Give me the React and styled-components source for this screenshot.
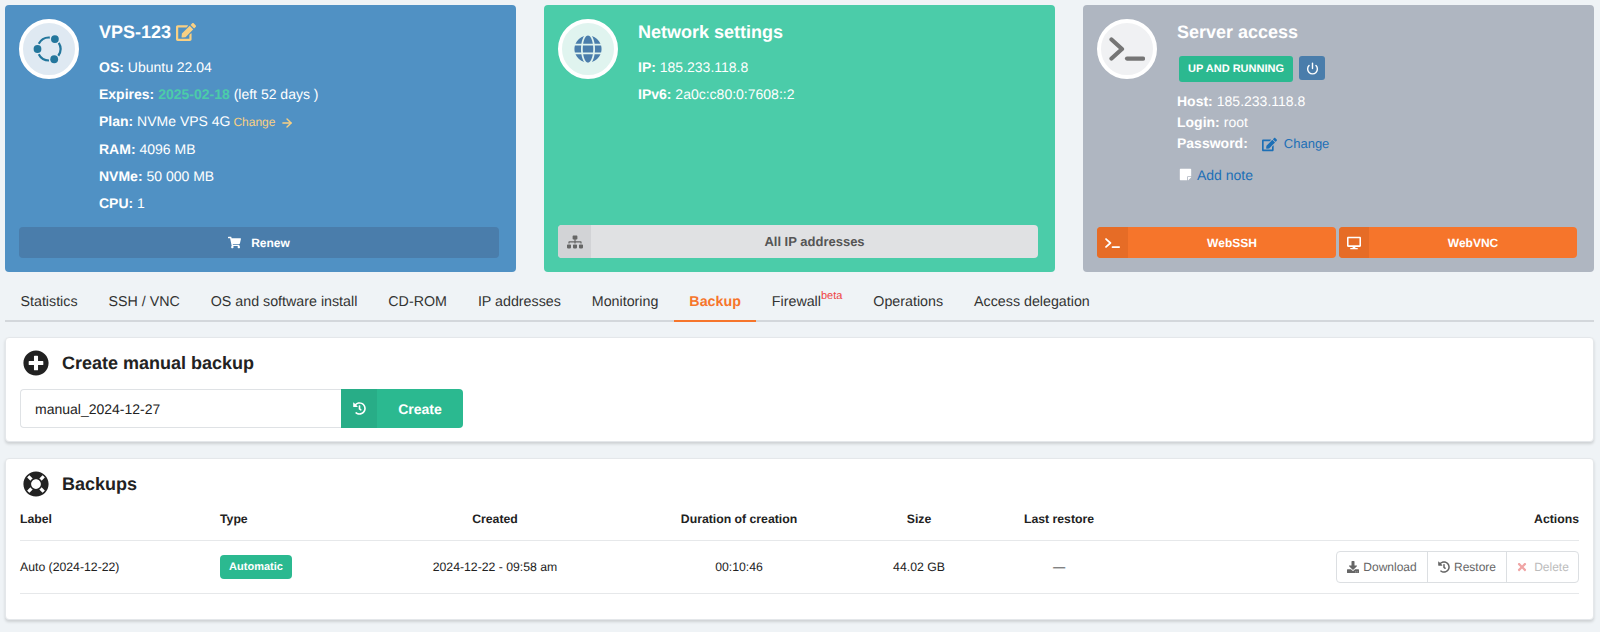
import React from 'react';
import styled, { createGlobalStyle } from 'styled-components';
import {
  FaEdit, FaShoppingCart, FaGlobe, FaSitemap, FaStickyNote, FaDesktop,
  FaPlusCircle, FaLifeRing, FaHistory, FaDownload, FaTimes,
} from 'react-icons/fa';
import { ArrowRight, Power } from 'lucide-react';

const Global = createGlobalStyle`
  html, body { margin: 0; padding: 0; background: #eff3f6; }
  body {
    font-family: "Liberation Sans", Arial, sans-serif;
    font-size: 14px;
    color: #222;
    -webkit-font-smoothing: antialiased;
    text-rendering: geometricPrecision;
  }
  button, input { text-rendering: geometricPrecision; }
`;

const Page = styled.div`
  width: 1600px;
  height: 632px;
  padding: 5px 6px 0 5px;
  box-sizing: border-box;
  overflow: hidden;
`;

const Cards = styled.div`
  display: grid;
  grid-template-columns: repeat(3, 511px);
  column-gap: 28px;
`;

const Card = styled.section`
  height: 267px;
  box-sizing: border-box;
  padding: 14px 17px 14px 14px;
  border-radius: 4px;
  background: ${p => p.$bg};
  color: #fff;
  display: flex;
  flex-direction: column;
`;

const CardHead = styled.div`
  display: flex;
  gap: 20px;
  flex: 1;
`;

const Avatar = styled.div`
  width: 60px;
  height: 60px;
  box-sizing: border-box;
  border: 4px solid #fff;
  border-radius: 50%;
  background: ${p => p.$bg};
  color: ${p => p.$fg};
  display: flex;
  align-items: center;
  justify-content: center;
  flex: none;
`;

const CardTitle = styled.h2`
  margin: 0 0 8px;
  font-size: 18px;
  line-height: 27px;
  font-weight: 700;
  display: flex;
  align-items: center;
  gap: 5px;
  color: #fff;
`;

const YellowEdit = styled(FaEdit)`
  color: #f9d083;
  font-size: 20px;
  margin-top: -1px;
`;

const InfoLine = styled.div`
  line-height: 27px;
  white-space: nowrap;
  font-size: 14px;
`;

const Strong = styled.b`
  font-weight: 700;
`;

const Date = styled.b`
  color: #4bcca9;
  font-weight: 700;
`;

const ChangePlan = styled.a`
  color: #f9d083;
  font-size: 12px;
  margin-left: -1px;
  display: inline-flex;
  align-items: center;
  gap: 5px;
`;

const WideButton = styled.button`
  height: ${p => p.$h || 31}px;
  width: 100%;
  border: 0;
  border-radius: 4px;
  padding: 0;
  background: ${p => p.$bg};
  color: ${p => p.$fg || '#fff'};
  font: 700 12px "Liberation Sans", Arial, sans-serif;
  display: flex;
  align-items: stretch;
  overflow: hidden;
  flex: none;
`;

const ButtonIcon = styled.span`
  width: ${p => p.$w}px;
  background: ${p => p.$bg};
  color: ${p => p.$fg || 'inherit'};
  display: flex;
  align-items: center;
  justify-content: center;
  flex: none;
`;

const ButtonText = styled.span`
  flex: 1;
  display: flex;
  align-items: center;
  justify-content: center;
  gap: 10px;
  font-size: ${p => p.$size || 12}px;
`;

const ButtonPair = styled.div`
  display: grid;
  grid-template-columns: 239px 238px;
  gap: 3px;
`;

const StatusRow = styled.div`
  display: flex;
  gap: 6px;
  align-items: flex-start;
  margin: 10px 0 9px 2px;
`;

const StatusBadge = styled.span`
  width: 114px;
  height: 26px;
  border-radius: 3px;
  background: #2bb990;
  color: #fff;
  font-size: 11px;
  font-weight: 700;
  display: flex;
  align-items: center;
  justify-content: center;
`;

const PowerButton = styled.span`
  width: 26px;
  height: 24px;
  border-radius: 3px;
  background: #4a7dab;
  color: #fff;
  display: flex;
  align-items: center;
  justify-content: center;
`;

const AccessLine = styled.div`
  line-height: 21.2px;
  font-size: 14px;
  white-space: nowrap;
  display: flex;
  align-items: center;
  gap: 4px;
`;

const PassLink = styled.a`
  color: #1c6fb6;
  font-size: 13px;
  display: inline-flex;
  align-items: center;
  gap: 7px;
  margin-left: 10px;
`;

const NoteLine = styled.div`
  margin: 10px 0 0 2px;
  display: flex;
  align-items: center;
  gap: 5px;
  line-height: 20px;
  font-size: 14px;
  color: #1c6fb6;
`;

const WhiteNote = styled(FaStickyNote)`
  color: #fff;
  font-size: 13px;
`;

const Tabs = styled.nav`
  margin-top: 10px;
  height: 38px;
  display: flex;
  border-bottom: 2px solid #d3d7db;
  box-sizing: content-box;
`;

const Tab = styled.a`
  padding: 0 15.5px;
  height: 38px;
  box-sizing: content-box;
  line-height: 40px;
  font-size: 14.25px;
  white-space: nowrap;
  color: ${p => (p.$active ? '#f6752b' : '#333')};
  font-weight: ${p => (p.$active ? 700 : 400)};
  border-bottom: 2px solid ${p => (p.$active ? '#f6752b' : 'transparent')};
`;

const Beta = styled.sup`
  color: #ee4444;
  font-size: 11px;
  line-height: 0;
  vertical-align: 7px;
`;

const Panel = styled.section`
  margin-top: ${p => p.$mt}px;
  height: ${p => p.$h}px;
  box-sizing: border-box;
  background: #fff;
  border: 1px solid #e4e7ea;
  border-radius: 4px;
  box-shadow: 0 2px 3px rgba(0, 0, 0, 0.14);
  padding: 13px 14px;
`;

const PanelTitle = styled.h3`
  margin: 0 0 14px;
  height: 24px;
  padding-left: 3px;
  display: flex;
  align-items: center;
  gap: 13px;
  font-size: 18px;
  font-weight: 700;
  color: #222;
`;

const TitleIcon = styled.span`
  font-size: 26px;
  width: 26px;
  height: 26px;
  display: flex;
  color: #222;
`;

const CreateForm = styled.div`
  display: flex;
  height: 39px;
`;

const NameInput = styled.input`
  width: 321px;
  box-sizing: border-box;
  border: 1px solid #dfe2e5;
  border-right: 0;
  border-radius: 4px 0 0 4px;
  padding: 0 14px;
  font: 14px "Liberation Sans", Arial, sans-serif;
  color: #222;
  outline: none;
`;

const CreateButton = styled.button`
  width: 122px;
  border: 0;
  padding: 0;
  background: #2bb990;
  border-radius: 0 4px 4px 0;
  color: #fff;
  font: 700 14px "Liberation Sans", Arial, sans-serif;
  display: flex;
  align-items: stretch;
  overflow: hidden;
`;

const columns = '200px 175px 200px 288px 72px 208px 1fr';

const HeadRow = styled.div`
  display: grid;
  grid-template-columns: ${columns};
  height: 28px;
  padding-top: 2px;
  align-items: start;
  border-bottom: 1px solid #e6e8ea;
`;

const DataRow = styled.div`
  display: grid;
  grid-template-columns: ${columns};
  height: 52px;
  align-items: center;
  border-bottom: 1px solid #e6e8ea;
`;

const HeadCell = styled.div`
  font-size: 12.25px;
  font-weight: 700;
  line-height: 14px;
  color: #222;
  text-align: ${p => p.$align || 'left'};
`;

const Cell = styled.div`
  font-size: 12.25px;
  color: #222;
  text-align: ${p => p.$align || 'left'};
`;

const TypeBadge = styled.span`
  display: inline-flex;
  width: 72px;
  height: 24px;
  border-radius: 4px;
  background: #2bb990;
  color: #fff;
  font-size: 11px;
  font-weight: 700;
  align-items: center;
  justify-content: center;
`;

const ActionGroup = styled.div`
  display: inline-flex;
  height: 32px;
  box-sizing: border-box;
  border: 1px solid #dcdfe2;
  border-radius: 4px;
  vertical-align: middle;
`;

const ActionButton = styled.span`
  width: ${p => p.$w}px;
  display: flex;
  align-items: center;
  justify-content: center;
  gap: 4px;
  font-size: 12px;
  color: ${p => (p.$muted ? '#bcbcbc' : '#666')};
  border-left: ${p => (p.$first ? '0' : '1px solid #dcdfe2')};
  box-sizing: border-box;
`;

const DeleteIcon = styled(FaTimes)`
  color: #f0a5a5;
  font-size: 12px;
  margin-right: 2px;
`;

const UbuntuIcon = () => (
  <svg width="32" height="32" viewBox="0 0 32 32" fill="none">
    <g stroke="#23769c" strokeWidth="2.2">
      <path d="M25.75 9.91A11.5 11.5 0 0 1 25.3 22.76" />
      <path d="M16 27.5A11.5 11.5 0 0 1 5.75 21.22" />
      <path d="M5.75 10.78A11.5 11.5 0 0 1 16.8 4.53" />
    </g>
    <g fill="#23769c">
      <circle cx="21.9" cy="6.1" r="3.9" />
      <circle cx="4.5" cy="16" r="3.9" />
      <circle cx="21.2" cy="26.25" r="3.9" />
    </g>
  </svg>
);

const TerminalIcon = ({ width }) => (
  <svg width={width} height={(width * 24) / 36} viewBox="0 0 36 24" fill="none" stroke="currentColor" strokeWidth="4.2" strokeLinecap="round" strokeLinejoin="round">
    <path d="M2.5 2.5L13 12L2.5 21.5" />
    <path d="M18 21.6H34" />
  </svg>
);

const tabs = ['Statistics', 'SSH / VNC', 'OS and software install', 'CD-ROM', 'IP addresses', 'Monitoring', 'Backup', 'Firewall', 'Operations', 'Access delegation'];

export default function App() {
  return (
    <Page>
      <Global />
      <Cards>
        <Card $bg="#5091c4">
          <CardHead>
            <Avatar $bg="#dfe9f2"><UbuntuIcon /></Avatar>
            <div>
              <CardTitle>VPS-123 <YellowEdit /></CardTitle>
              <InfoLine><Strong>OS:</Strong> Ubuntu 22.04</InfoLine>
              <InfoLine><Strong>Expires:</Strong> <Date>2025-02-18</Date> (left 52 days )</InfoLine>
              <InfoLine><Strong>Plan:</Strong> NVMe VPS 4G <ChangePlan>Change <ArrowRight size={14} strokeWidth={2.4} /></ChangePlan></InfoLine>
              <InfoLine><Strong>RAM:</Strong> 4096 MB</InfoLine>
              <InfoLine><Strong>NVMe:</Strong> 50 000 MB</InfoLine>
              <InfoLine><Strong>CPU:</Strong> 1</InfoLine>
            </div>
          </CardHead>
          <WideButton $bg="#4a7dab">
            <ButtonText><FaShoppingCart size={13} /> Renew</ButtonText>
          </WideButton>
        </Card>

        <Card $bg="#4bcca9">
          <CardHead>
            <Avatar $bg="#e0f4ef" $fg="#4a7dab"><FaGlobe size={28} /></Avatar>
            <div>
              <CardTitle>Network settings</CardTitle>
              <InfoLine><Strong>IP:</Strong> 185.233.118.8</InfoLine>
              <InfoLine><Strong>IPv6:</Strong> 2a0c:c80:0:7608::2</InfoLine>
            </div>
          </CardHead>
          <WideButton $h={33} $bg="#e0e1e3" $fg="#555">
            <ButtonIcon $w={33} $bg="#d2d3d6" $fg="#666"><FaSitemap size={16} /></ButtonIcon>
            <ButtonText $size={13}>All IP addresses</ButtonText>
          </WideButton>
        </Card>

        <Card $bg="#afb6c1">
          <CardHead>
            <Avatar $bg="#f0f1f3" $fg="#757575"><TerminalIcon width={36} /></Avatar>
            <div>
              <CardTitle>Server access</CardTitle>
              <StatusRow>
                <StatusBadge>UP AND RUNNING</StatusBadge>
                <PowerButton><Power size={13} strokeWidth={2.6} /></PowerButton>
              </StatusRow>
              <AccessLine><Strong>Host:</Strong> 185.233.118.8</AccessLine>
              <AccessLine><Strong>Login:</Strong> root</AccessLine>
              <AccessLine>
                <Strong>Password:</Strong>
                <PassLink><FaEdit size={15} /> Change</PassLink>
              </AccessLine>
              <NoteLine><WhiteNote /> Add note</NoteLine>
            </div>
          </CardHead>
          <ButtonPair>
            <WideButton $bg="#f6752b">
              <ButtonIcon $w={31} $bg="#e66c26"><TerminalIcon width={15} /></ButtonIcon>
              <ButtonText>WebSSH</ButtonText>
            </WideButton>
            <WideButton $bg="#f6752b">
              <ButtonIcon $w={30} $bg="#e66c26"><FaDesktop size={14} /></ButtonIcon>
              <ButtonText>WebVNC</ButtonText>
            </WideButton>
          </ButtonPair>
        </Card>
      </Cards>

      <Tabs>
        {tabs.map(t => (
          <Tab key={t} $active={t === 'Backup'}>
            {t}{t === 'Firewall' && <Beta>beta</Beta>}
          </Tab>
        ))}
      </Tabs>

      <Panel $mt={15} $h={105}>
        <PanelTitle><TitleIcon><FaPlusCircle /></TitleIcon>Create manual backup</PanelTitle>
        <CreateForm>
          <NameInput defaultValue="manual_2024-12-27" />
          <CreateButton>
            <ButtonIcon $w={36} $bg="#28ad87"><FaHistory size={13} /></ButtonIcon>
            <ButtonText $size={14}>Create</ButtonText>
          </CreateButton>
        </CreateForm>
      </Panel>

      <Panel $mt={16} $h={162}>
        <PanelTitle><TitleIcon><FaLifeRing /></TitleIcon>Backups</PanelTitle>
        <HeadRow>
          <HeadCell>Label</HeadCell>
          <HeadCell>Type</HeadCell>
          <HeadCell $align="center">Created</HeadCell>
          <HeadCell $align="center">Duration of creation</HeadCell>
          <HeadCell $align="center">Size</HeadCell>
          <HeadCell $align="center">Last restore</HeadCell>
          <HeadCell $align="right">Actions</HeadCell>
        </HeadRow>
        <DataRow>
          <Cell>Auto (2024-12-22)</Cell>
          <Cell><TypeBadge>Automatic</TypeBadge></Cell>
          <Cell $align="center">2024-12-22 - 09:58 am</Cell>
          <Cell $align="center">00:10:46</Cell>
          <Cell $align="center">44.02 GB</Cell>
          <Cell $align="center">—</Cell>
          <Cell $align="right">
            <ActionGroup>
              <ActionButton $first $w={90}><FaDownload size={12} /> Download</ActionButton>
              <ActionButton $w={79}><FaHistory size={12} /> Restore</ActionButton>
              <ActionButton $w={72} $muted><DeleteIcon /> Delete</ActionButton>
            </ActionGroup>
          </Cell>
        </DataRow>
      </Panel>
    </Page>
  );
}
